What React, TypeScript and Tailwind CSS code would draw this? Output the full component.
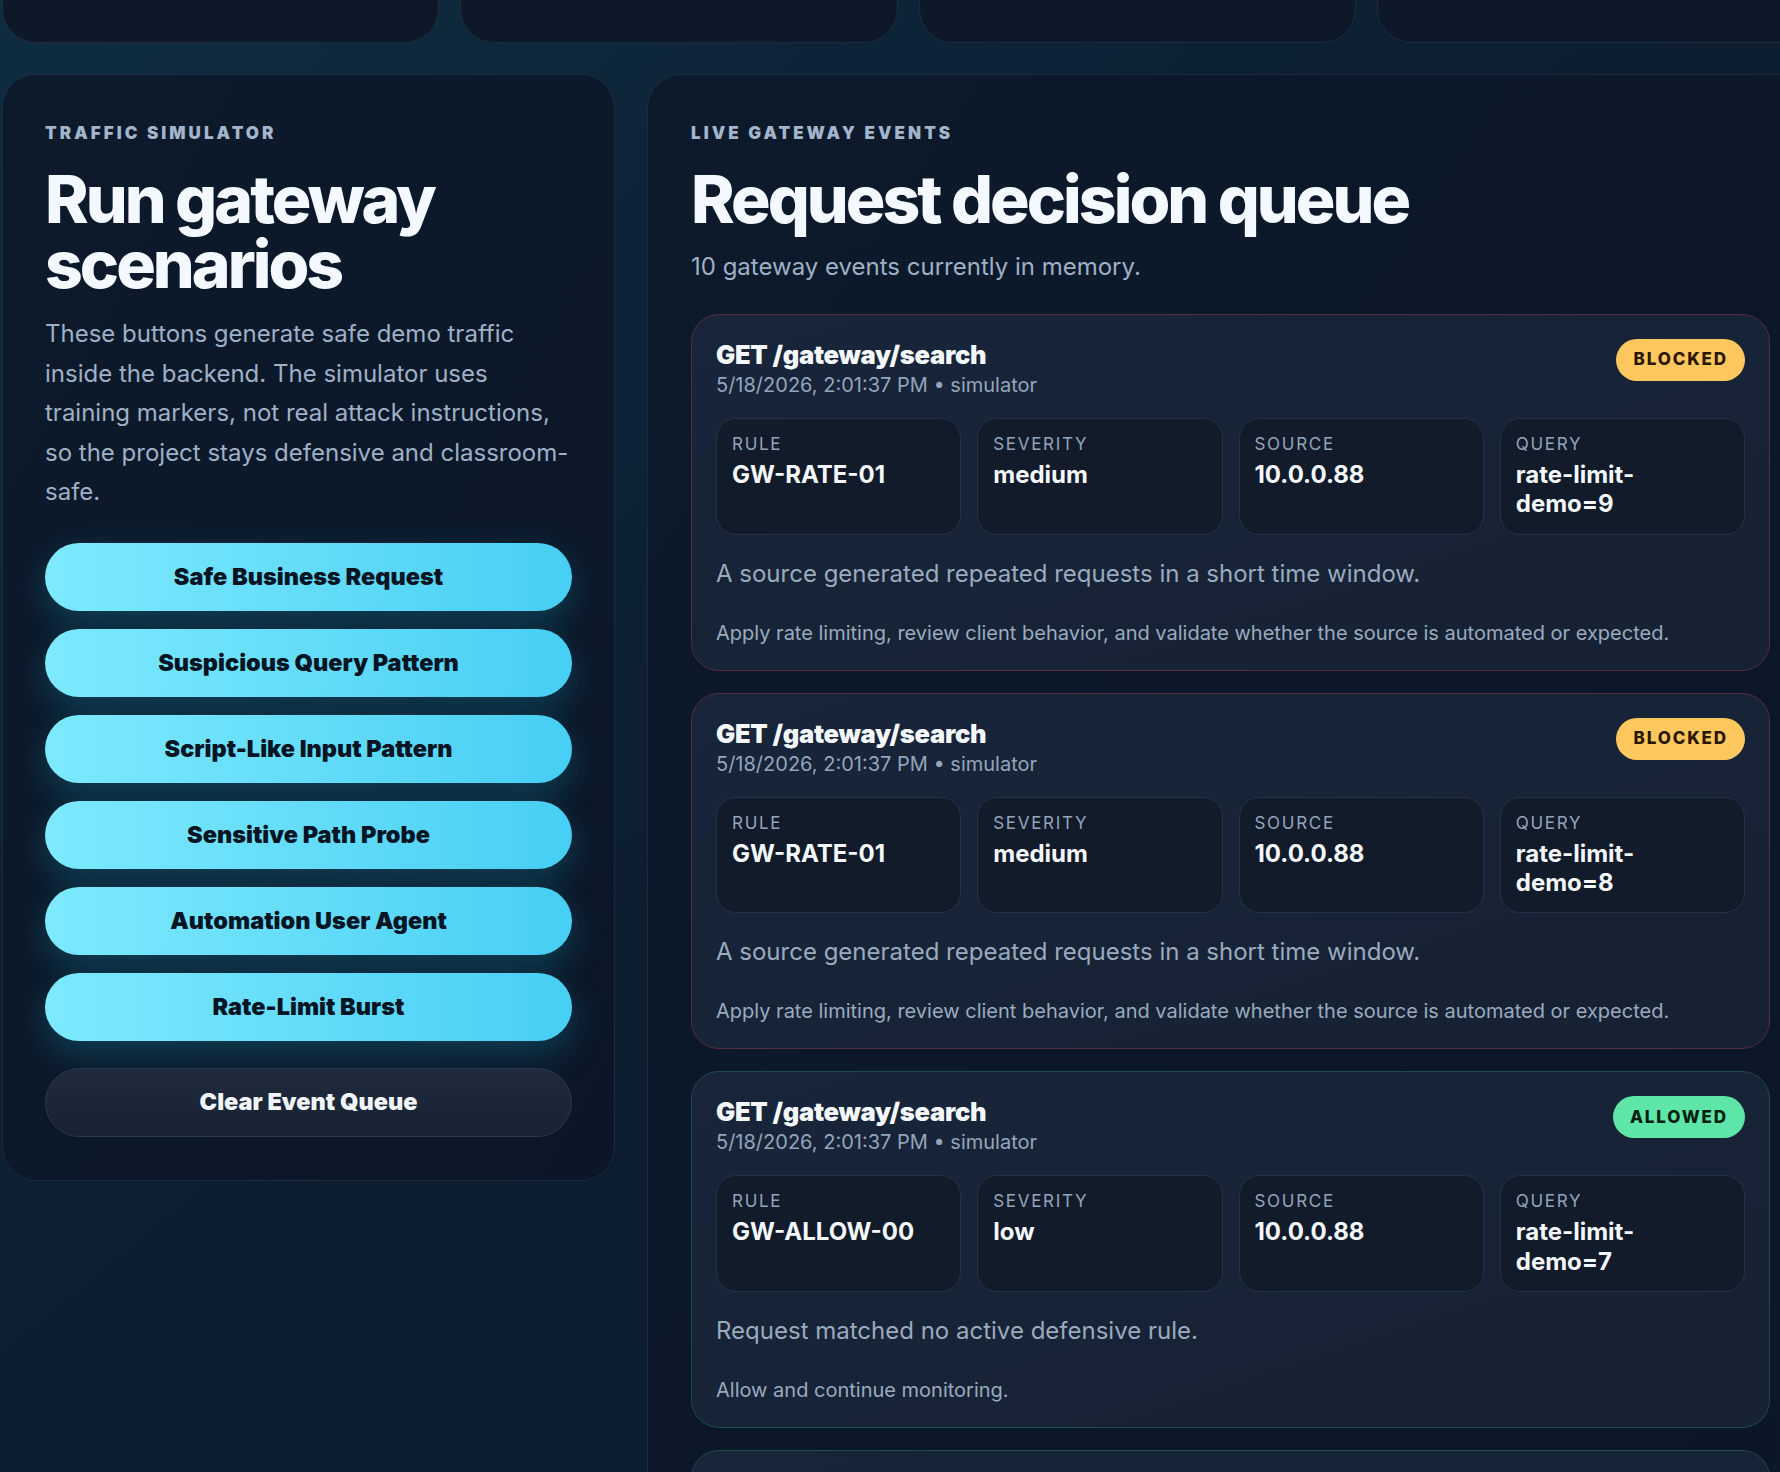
import { FC } from 'react';

interface GatewayEvent {
  id: number;
  method: string;
  path: string;
  time: string;
  origin: string;
  decision: 'BLOCKED' | 'ALLOWED';
  rule: string;
  severity: string;
  source: string;
  query: string;
  reason: string;
  action: string;
}

const RATE_REASON = 'A source generated repeated requests in a short time window.';
const RATE_ACTION =
  'Apply rate limiting, review client behavior, and validate whether the source is automated or expected.';

const events: GatewayEvent[] = [
  { id: 10, method: 'GET', path: '/gateway/search', time: '5/18/2026, 2:01:37 PM', origin: 'simulator', decision: 'BLOCKED', rule: 'GW-RATE-01', severity: 'medium', source: '10.0.0.88', query: 'rate-limit-demo=9', reason: RATE_REASON, action: RATE_ACTION },
  { id: 9, method: 'GET', path: '/gateway/search', time: '5/18/2026, 2:01:37 PM', origin: 'simulator', decision: 'BLOCKED', rule: 'GW-RATE-01', severity: 'medium', source: '10.0.0.88', query: 'rate-limit-demo=8', reason: RATE_REASON, action: RATE_ACTION },
  { id: 8, method: 'GET', path: '/gateway/search', time: '5/18/2026, 2:01:37 PM', origin: 'simulator', decision: 'ALLOWED', rule: 'GW-ALLOW-00', severity: 'low', source: '10.0.0.88', query: 'rate-limit-demo=7', reason: 'Request matched no active defensive rule.', action: 'Allow and continue monitoring.' },
  { id: 7, method: 'GET', path: '/gateway/search', time: '5/18/2026, 2:01:37 PM', origin: 'simulator', decision: 'ALLOWED', rule: 'GW-ALLOW-00', severity: 'low', source: '10.0.0.88', query: 'rate-limit-demo=6', reason: 'Request matched no active defensive rule.', action: 'Allow and continue monitoring.' },
];

const scenarios = [
  'Safe Business Request',
  'Suspicious Query Pattern',
  'Script-Like Input Pattern',
  'Sensitive Path Probe',
  'Automation User Agent',
  'Rate-Limit Burst',
];

// stat tiles sit above the fold; only their bottom edges show
const statTiles = ['total', 'blocked', 'allowed', 'rules'];

const Field: FC<{ label: string; value: string }> = ({ label, value }) => (
  <div className="rounded-[20px] border border-[#243247] bg-[#111b2a] p-[15px]">
    <div className="text-[17px] leading-[1.25] tracking-[0.1em] text-[#94a5bb] uppercase">{label}</div>
    <div className="mt-[5px] max-w-[190px] text-[24px] leading-[1.22] font-bold text-[#f4f8fc]">{value}</div>
  </div>
);

const EventCard: FC<{ event: GatewayEvent }> = ({ event }) => {
  const blocked = event.decision === 'BLOCKED';
  return (
    <article
      className={`rounded-[28px] border bg-gradient-to-br from-[#18253a] to-[#162133] px-6 pt-6 pb-[22px] ${
        blocked ? 'border-[#5a2a3e]' : 'border-[#1d4c48]'
      }`}
    >
      <div className="flex items-start justify-between">
        <div>
          <h3 className="text-[25.5px] leading-[1.25] font-black tracking-[-0.01em] text-[#f4f8fc]">
            {event.method} {event.path}
          </h3>
          <p className="text-[20px] leading-[1.4] text-[#94a5bb]">
            {event.time} • {event.origin}
          </p>
        </div>
        <span
          className={`flex h-[42px] items-center rounded-full px-[17px] text-[17px] font-extrabold tracking-[0.11em] ${
            blocked ? 'bg-[#ffc85e] text-[#2b1700]' : 'bg-[#5ee6a8] text-[#03200f]'
          }`}
        >
          {event.decision}
        </span>
      </div>
      <div className="mt-[19px] grid grid-cols-4 gap-4">
        <Field label="Rule" value={event.rule} />
        <Field label="Severity" value={event.severity} />
        <Field label="Source" value={event.source} />
        <Field label="Query" value={event.query} />
      </div>
      <p className="mt-[21px] text-[24px] leading-[1.5] text-[#9aaabf]">{event.reason}</p>
      <p className="mt-[26px] text-[20px] leading-[1.5] text-[#9aaabf]">{event.action}</p>
    </article>
  );
};

const App: FC = () => {
  return (
    <div className="h-screen w-full overflow-hidden bg-gradient-to-br from-[#0f2c40] via-[#0c1d30] to-[#0b1d34] font-['Inter','Noto_Sans',sans-serif]">
      <div className="-mt-[110px] ml-[2px] w-[1812px]">
        {/* Stat strip (scrolled mostly out of view) */}
        <div className="grid grid-cols-4 gap-[21px]">
          {statTiles.map((key) => (
            <div key={key} className="h-[153px] rounded-[34px] border border-[#1e2c40] bg-[#0d1828]" />
          ))}
        </div>

        <div className="mt-[31px] grid grid-cols-[613px_1fr] items-start gap-8">
          {/* Traffic simulator */}
          <section className="rounded-[34px] border border-[#1c2a3d] bg-gradient-to-br from-[#0c1a2c] to-[#0b1728] px-[42px] pt-[48px] pb-[43px]">
            <div className="text-[17px] leading-[20px] font-black uppercase tracking-[0.18em] text-[#a3b5cb]">
              Traffic simulator
            </div>
            <h1 className="mt-[24px] text-[66px] leading-[65px] font-extrabold tracking-[-0.045em] text-[#f3f9ff]">
              Run gateway scenarios
            </h1>
            <p className="mt-[17px] text-[24px] leading-[39.5px] text-[#9fb0c6]">
              These buttons generate safe demo traffic inside the backend. The simulator uses training
              markers, not real attack instructions, so the project stays defensive and classroom-safe.
            </p>
            <div className="mt-[31px] flex flex-col gap-[18px]">
              {scenarios.map((name) => (
                <button
                  key={name}
                  className="h-[68px] rounded-full bg-gradient-to-r from-[#7deafd] to-[#46cef4] text-[23.5px] font-black text-[#061423] shadow-[0_12px_34px_rgba(34,200,238,0.22)]"
                >
                  {name}
                </button>
              ))}
            </div>
            <button className="mt-[27px] h-[69px] w-full rounded-full border border-[#2b394c] bg-gradient-to-b from-[#1f2b3d] to-[#172233] text-[23.5px] font-black text-[#f1f5f9]">
              Clear Event Queue
            </button>
          </section>

          {/* Live gateway events */}
          <section className="min-h-[1500px] rounded-[34px] border border-[#1c2a3d] bg-gradient-to-br from-[#0c1a2c] to-[#0b1627] px-[43px] pt-[48px]">
            <div className="text-[17px] leading-[20px] font-black uppercase tracking-[0.18em] text-[#a3b5cb]">
              Live gateway events
            </div>
            <h2 className="mt-[24px] text-[66px] leading-[65px] font-extrabold tracking-[-0.045em] text-[#f3f9ff]">
              Request decision queue
            </h2>
            <p className="mt-[15px] text-[24px] leading-[39px] text-[#9fb0c6]">
              10 gateway events currently in memory.
            </p>
            <div className="mt-[28px] flex flex-col gap-[22px]">
              {events.map((e) => (
                <EventCard key={e.id} event={e} />
              ))}
            </div>
          </section>
        </div>
      </div>
    </div>
  );
};

export default App;
